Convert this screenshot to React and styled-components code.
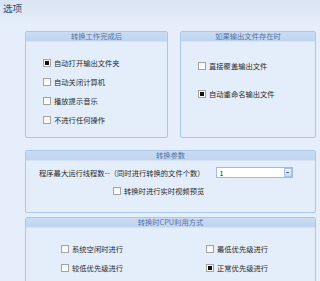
import React from 'react';
import styled, { createGlobalStyle } from 'styled-components';

const Global = createGlobalStyle`
  html, body {
    margin: 0;
    padding: 0;
    background: #e5eefa;
    font-family: "Noto Sans CJK SC", "Noto Sans", sans-serif;
  }
`;

const Window = styled.div`
  width: 320px;
  height: 281px;
  overflow: hidden;
  background: #e5eefa;
`;

const TitleBar = styled.div`
  height: 16px;
  padding-left: 3px;
  display: flex;
  align-items: center;
  font-size: 9.6px;
  color: #2f4a74;
  background: linear-gradient(#dae5f4, #e0e9f6);
`;

const Shade = styled.div`
  height: 10px;
  background: linear-gradient(#e0e9f6, #e5eefa);
`;

const Content = styled.div`
  padding: 5px 4px 0 25px;
  display: flex;
  flex-direction: column;
`;

const Row = styled.div`
  display: flex;
  gap: 12px;
`;

const Group = styled.div`
  box-sizing: border-box;
  border: 1px solid #a9c7ec;
  border-radius: 2px;
  background: #e4eefb;
  width: ${p => p.$w || 'auto'};
  height: ${p => p.$h};
  margin-top: ${p => p.$mt || '0px'};
  display: flex;
  flex-direction: column;
`;

const Header = styled.div`
  height: 9px;
  line-height: 9px;
  text-align: center;
  font-size: 7.3px;
  color: #5773a0;
  background: linear-gradient(#c9dcf3, #bfd4ef);
  border-bottom: 1px solid #d6e3f4;
`;

const Body = styled.div`
  display: flex;
  flex-direction: column;
  padding: ${p => p.$pad};
  gap: ${p => p.$gap};
`;

const Option = styled.div`
  display: flex;
  align-items: center;
  gap: 3px;
  height: 10px;
  font-size: 7.3px;
  color: #2a2a2a;
  white-space: nowrap;
`;

const Box = styled.span`
  box-sizing: border-box;
  width: 8px;
  height: 8px;
  border: 1px solid #a4a4a4;
  background: linear-gradient(#f4f4f4, #ffffff);
  display: flex;
  align-items: center;
  justify-content: center;
  flex: none;
  &::after {
    content: '';
    width: 4px;
    height: 4px;
    background: #111;
    display: ${p => (p.$on ? 'block' : 'none')};
  }
`;

const ParamRow = styled.div`
  display: flex;
  align-items: center;
  gap: 11px;
  font-size: 7.3px;
  color: #2a2a2a;
  white-space: nowrap;
`;

const Select = styled.div`
  box-sizing: border-box;
  width: 77px;
  height: 11px;
  border: 1px solid #a3bbdb;
  background: #fff;
  display: flex;
  align-items: center;
  justify-content: space-between;
  padding-left: 3px;
  font-size: 7px;
  color: #222;
`;

const DropButton = styled.span`
  box-sizing: border-box;
  width: 8px;
  height: 9px;
  border: 1px solid #a9c2e2;
  background: linear-gradient(#e9f1fb, #cddcf0);
  display: flex;
  align-items: center;
  justify-content: center;
  &::after {
    content: '';
    width: 3px;
    height: 1px;
    background: #4c6c9c;
  }
`;

const Indented = styled.div`
  display: flex;
  padding-left: ${p => p.$left};
`;

const Columns = styled.div`
  display: grid;
  grid-template-columns: 145px auto;
  row-gap: 9px;
  padding: 16px 0 0 35px;
`;

const Check = ({ on, children }) => (
  <Option>
    <Box $on={on} />
    {children}
  </Option>
);

const App = () => (
  <Window>
    <Global />
    <TitleBar>选项</TitleBar>
    <Shade />
    <Content>
      <Row>
        <Group $w="143px" $h="107px">
          <Header>转换工作完成后</Header>
          <Body $pad="16px 0 0 17px" $gap="9px">
            <Check on>自动打开输出文件夹</Check>
            <Check>自动关闭计算机</Check>
            <Check>播放提示音乐</Check>
            <Check>不进行任何操作</Check>
          </Body>
        </Group>
        <Group $w="136px" $h="107px">
          <Header>如果输出文件存在时</Header>
          <Body $pad="19px 0 0 17px" $gap="18px">
            <Check>直接覆盖输出文件</Check>
            <Check on>自动重命名输出文件</Check>
          </Body>
        </Group>
      </Row>
      <Group $h="63px" $mt="12px">
        <Header>转换参数</Header>
        <Body $pad="6px 0 0 13px" $gap="8px">
          <ParamRow>
            程序最大运行线程数--（同时进行转换的文件个数）
            <Select>
              1
              <DropButton />
            </Select>
          </ParamRow>
          <Indented $left="74px">
            <Check>转换时进行实时视频预览</Check>
          </Indented>
        </Body>
      </Group>
      <Group $h="70px" $mt="4px">
        <Header>转换时CPU利用方式</Header>
        <Columns>
          <Check>系统空闲时进行</Check>
          <Check>最低优先级进行</Check>
          <Check>较低优先级进行</Check>
          <Check on>正常优先级进行</Check>
        </Columns>
      </Group>
    </Content>
  </Window>
);

export default App;
